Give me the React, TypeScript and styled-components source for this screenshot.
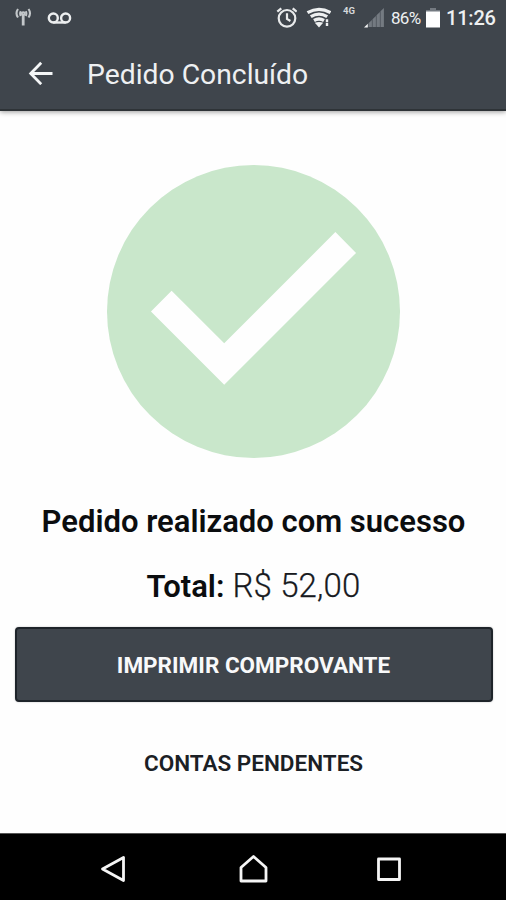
import React from "react";
import styled, { createGlobalStyle } from "styled-components";

const GlobalStyle = createGlobalStyle`
  * { box-sizing: border-box; }
  body { margin: 0; background: #fefefe; }
`;

const slate = "#3f454c";

const Screen = styled.div`
  width: 506px;
  height: 900px;
  display: flex;
  flex-direction: column;
  overflow: hidden;
  background: #fefefe;
  color: #0b0d0f;
  font-family: Roboto, "Liberation Sans", sans-serif;
`;

const Header = styled.header`
  flex: none;
  height: 111px;
  background: ${slate};
  border-bottom: 2px solid #2e3337;
  box-shadow: 0 1px 5px rgba(0, 0, 0, 0.4);
`;

const StatusBar = styled.div`
  height: 36px;
  display: flex;
  align-items: center;
  padding: 0 11px 0 14px;
  color: #eef0f1;
`;

const StatusIcon = styled.svg<{ $gap?: number }>`
  flex: none;
  display: block;
  margin-left: ${(p) => p.$gap ?? 0}px;
`;

const Spacer = styled.div`
  flex: 1;
`;

const Network = styled.span`
  width: 13px;
  margin: -14px 8px 0 12px;
  font-size: 9.5px;
  line-height: 10px;
  font-weight: 700;
  color: #d5d8da;
`;

const Battery = styled.span`
  width: 30px;
  margin: -1px 5px 0 7px;
  font-size: 17px;
  line-height: 20px;
  letter-spacing: -0.7px;
  white-space: nowrap;
`;

const Clock = styled.time`
  width: 49px;
  margin: 0 0 0 6px;
  font-size: 20px;
  line-height: 24px;
  font-weight: 500;
  letter-spacing: -0.2px;
  white-space: nowrap;
`;

const AppBar = styled.div`
  height: 74px;
  display: flex;
  align-items: center;
  padding-left: 28px;
`;

const BackButton = styled.button`
  width: 24px;
  height: 24px;
  padding: 0;
  border: 0;
  background: none;
  display: block;
`;

const Title = styled.h1`
  margin: 3px 0 0 35px;
  font-size: 28.3px;
  line-height: 36px;
  font-weight: 400;
  color: #eef0f2;
  white-space: nowrap;
`;

const Content = styled.main`
  flex: 1;
  display: flex;
  flex-direction: column;
  align-items: center;
  padding: 54px 14px 0 15px;
`;

const SuccessMark = styled.svg`
  display: block;
  width: 293px;
  height: 293px;
  flex: none;
`;

const Message = styled.h2`
  margin: 44px 0 0;
  font-size: 31px;
  line-height: 40px;
  font-weight: 600;
  white-space: nowrap;
`;

const Total = styled.p`
  margin: 22px 0 0;
  height: 44px;
  display: flex;
  align-items: baseline;
  gap: 8px;
  line-height: 44px;
  white-space: nowrap;
`;

const TotalLabel = styled.strong`
  font-size: 31px;
  font-weight: 600;
`;

const TotalValue = styled.span`
  font-size: 33px;
  font-weight: 300;
  letter-spacing: 0.15px;
  color: #171a1e;
  -webkit-text-stroke: 0.25px #171a1e;
`;

const PrimaryButton = styled.button`
  flex: none;
  width: 478px;
  height: 75px;
  margin: 19px 0 0;
  padding: 1px 0 0;
  border: 2px solid #1e242a;
  border-radius: 4px;
  background: ${slate};
  box-shadow: 0 0 2px rgba(0, 0, 0, 0.25);
  color: #f8f9fa;
  font: 700 22.5px/28px Roboto, "Liberation Sans", sans-serif;
  white-space: nowrap;
`;

const TextButton = styled.button`
  margin: 46px 0 0;
  padding: 0;
  border: 0;
  background: none;
  color: #1b2025;
  font: 600 22.5px/30px Roboto, "Liberation Sans", sans-serif;
  white-space: nowrap;
`;

const NavigationBar = styled.nav`
  flex: none;
  height: 67px;
  display: flex;
  align-items: center;
  padding: 3px 0 0 99px;
  border-top: 1px solid #555;
  background: #000;
`;

const NavButton = styled.button<{ $gap?: number }>`
  width: 30px;
  height: 30px;
  margin-left: ${(p) => p.$gap ?? 0}px;
  padding: 0;
  border: 0;
  background: none;

  svg {
    display: block;
    fill: none;
    stroke: #f5f5f5;
    stroke-width: 2.8;
    stroke-linejoin: round;
  }
`;

export default function App() {
  return (
    <Screen>
      <GlobalStyle />
      <Header>
        <StatusBar>
          <StatusIcon width="20" height="20" viewBox="0 0 20 20" fill="none" stroke="#c3c7ca" strokeWidth="2.1">
            <path d="M4 1Q1 5.2 4 9.5M6.8 3.2Q5.5 5.5 6.8 8M14.5 1Q17.5 5.2 14.5 9.5M11.7 3.2Q13 5.5 11.7 8" />
            <circle cx="9.2" cy="5.6" r="1.4" />
            <path d="M9.2 7v10.5" strokeWidth="2.8" />
          </StatusIcon>
          <StatusIcon $gap={13} width="26" height="14" viewBox="0 0 26 14" fill="none" stroke="#eceeef" strokeWidth="2.4">
            <circle cx="6.3" cy="7" r="4.5" />
            <circle cx="18.6" cy="7" r="4.5" />
            <path d="M6.3 11.5h12.3" />
          </StatusIcon>
          <Spacer />
          <StatusIcon width="22" height="22" viewBox="0 0 22 22" fill="none" stroke="#e8eaeb" strokeWidth="2.2">
            <circle cx="12" cy="11.3" r="8.3" />
            <path d="M12 6.3v5.5l3.4 2.2M2.3 4.7l4-3.4M21.7 4.7l-4-3.4" />
          </StatusIcon>
          <StatusIcon $gap={9} width="25" height="22" viewBox="0 0 25 22" fill="none" stroke="#eef0f1" strokeWidth="3.3">
            <path d="M1.5 5.6q11.5-6.6 23 0M4.8 9.7q8.2-5 16.4 0M8 13.5q5-3 10 0" />
            <path d="M8.8 15.8q4.2-1.8 8.4 0L13 20.4z" fill="#eef0f1" stroke="none" />
            <path d="M21 12.2v3M21 16v3" strokeWidth="2.4" />
          </StatusIcon>
          <Network>4G</Network>
          <StatusIcon width="20" height="20" viewBox="0 0 20 20" fill="#747a81">
            <path d="M4.5 15.3l3.4-3.4V19H4.5zM8.5 11.3l3.4-3.4V19H8.5zM12.5 7.3l3.4-3.4V19h-3.4zM16.5 3.3L19.9 0v19h-3.4z" />
            <path d="M0 19.5l3.8-3.8v3.8z" fill="#f4f5f5" />
          </StatusIcon>
          <Battery>86%</Battery>
          <StatusIcon width="14" height="21" viewBox="0 0 14 21">
            <path d="M4 0h6v2h4v2H0V2h4z" fill="#747a81" />
            <path d="M0 3.5h14v16H0z" fill="#fff" />
          </StatusIcon>
          <Clock>11:26</Clock>
        </StatusBar>
        <AppBar>
          <BackButton aria-label="Voltar">
            <svg width="25" height="24" viewBox="0 0 25 24" fill="none" stroke="#f4f6f7" strokeWidth="2.8">
              <path d="M24.5 12.5H3M13.2 1.8L2.7 12.5l10.5 10.7" />
            </svg>
          </BackButton>
          <Title>Pedido Concluído</Title>
        </AppBar>
      </Header>

      <Content>
        <SuccessMark viewBox="2 2 20 20" aria-hidden="true">
          <circle cx="12" cy="12" r="10" fill="#c9e7cb" />
          <path d="M10 17l-5-5 1.41-1.41L10 14.17l7.59-7.59L19 8z" fill="#fefefe" />
        </SuccessMark>
        <Message>Pedido realizado com sucesso</Message>
        <Total>
          <TotalLabel>Total:</TotalLabel>
          <TotalValue>R$ 52,00</TotalValue>
        </Total>
        <PrimaryButton>IMPRIMIR COMPROVANTE</PrimaryButton>
        <TextButton>CONTAS PENDENTES</TextButton>
      </Content>

      <NavigationBar>
        <NavButton aria-label="Voltar">
          <svg width="30" height="30" viewBox="0 0 30 30">
            <path d="M24.5 3.5v23L3.5 15z" />
          </svg>
        </NavButton>
        <NavButton $gap={110} aria-label="Início">
          <svg width="30" height="30" viewBox="0 0 30 30">
            <path d="M14.5 2.5L27 13.5V27H2V13.5z" />
          </svg>
        </NavButton>
        <NavButton $gap={105} aria-label="Recentes">
          <svg width="30" height="30" viewBox="0 0 30 30">
            <path d="M4.5 5h21v20.5h-21z" />
          </svg>
        </NavButton>
      </NavigationBar>
    </Screen>
  );
}
